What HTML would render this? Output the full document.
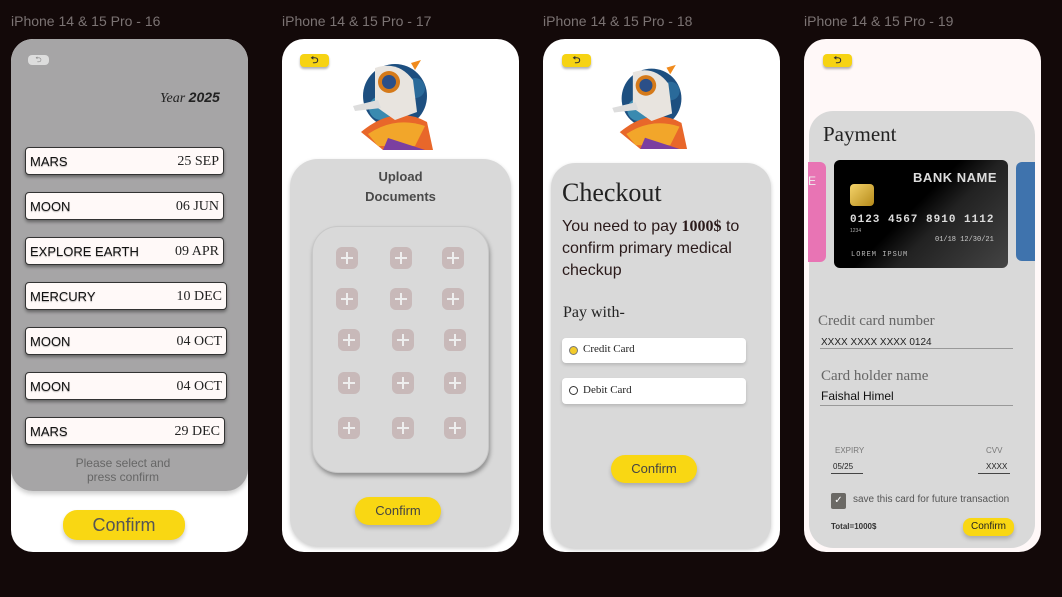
<!DOCTYPE html>
<html><head><meta charset="utf-8"><style>
*{margin:0;padding:0;box-sizing:border-box}
body{width:1062px;height:597px;background:#130909;position:relative;overflow:hidden;font-family:"Liberation Sans",sans-serif}
.a{position:absolute}
.lbl{position:absolute;top:13px;color:#7b7373;font-size:14px}
.frame{position:absolute;top:39px;width:237px;height:513px;border-radius:22px;background:#fff;overflow:hidden}
.row{position:absolute;left:25px;width:199px;height:28px;background:#fff9f8;border:1px solid #333;border-radius:4px;box-shadow:0 2px 3px rgba(0,0,0,.4)}
.row .l{position:absolute;left:4px;top:6px;font-size:13px;color:#111;text-shadow:0 1px 1px rgba(0,0,0,.3)}
.row .r{position:absolute;right:4px;top:6px;font-size:14px;font-family:"Liberation Serif",serif;color:#222}
.back{position:absolute;width:29px;height:13px;border-radius:4px;background:#f6d313;box-shadow:0 2px 2px rgba(0,0,0,.3);font-size:10px;line-height:13px;text-align:center;color:#333;font-weight:bold}
.plus{position:absolute;width:22px;height:22px;border-radius:6px;background:#c8b9b9}
.plus:before{content:"";position:absolute;left:5px;top:10px;width:12px;height:2px;background:#eee}
.plus:after{content:"";position:absolute;left:10px;top:5px;width:2px;height:12px;background:#eee}
.btn{position:absolute;background:#f9d713;border-radius:14px;text-align:center;color:#444;box-shadow:0 3px 4px rgba(0,0,0,.2)}
.ser{font-family:"Liberation Serif",serif}
</style></head><body>
<div class="lbl" style="left:11px">iPhone 14 &amp; 15 Pro - 16</div>
<div class="lbl" style="left:282px">iPhone 14 &amp; 15 Pro - 17</div>
<div class="lbl" style="left:543px">iPhone 14 &amp; 15 Pro - 18</div>
<div class="lbl" style="left:804px">iPhone 14 &amp; 15 Pro - 19</div>

<!-- Frame 1 -->
<div class="frame" style="left:11px">
 <div class="a" style="left:0;top:0;width:237px;height:452px;background:#a6a5a6;border-radius:22px;box-shadow:0 3px 5px rgba(0,0,0,.2)"></div>
</div>
<div class="a" style="left:28px;top:55px;width:21px;height:10px;border-radius:4px;background:#ddd;font-size:8px;line-height:10px;text-align:center;color:#888">⮌</div>
<div class="a ser" style="left:160px;top:89px;font-size:14px;color:#222"><i>Year</i> <b style="font-family:'Liberation Sans';font-style:italic">2025</b></div>
<div class="row" style="top:147px"><span class="l">MARS</span><span class="r">25 SEP</span></div>
<div class="row" style="top:192px"><span class="l">MOON</span><span class="r">06 JUN</span></div>
<div class="row" style="top:237px"><span class="l">EXPLORE EARTH</span><span class="r">09 APR</span></div>
<div class="row" style="top:282px;width:202px"><span class="l">MERCURY</span><span class="r">10 DEC</span></div>
<div class="row" style="top:327px;width:202px"><span class="l">MOON</span><span class="r">04 OCT</span></div>
<div class="row" style="top:372px;width:202px"><span class="l">MOON</span><span class="r">04 OCT</span></div>
<div class="row" style="top:417px;width:200px"><span class="l">MARS</span><span class="r">29 DEC</span></div>
<div class="a" style="left:60px;top:456px;width:126px;text-align:center;font-size:12px;line-height:14px;color:#666">Please select and press confirm</div>
<div class="btn" style="left:63px;top:510px;width:122px;height:30px;font-size:18px;line-height:30px;color:#555">Confirm</div>

<!-- astronaut svg template -->
<svg width="0" height="0" style="position:absolute"><defs>
<g id="astro">
 <circle cx="42" cy="38" r="32" fill="#1d4f80"/>
 <circle cx="28" cy="50" r="12" fill="#3a8ab0"/>
 <circle cx="62" cy="30" r="10" fill="#2a6a9a"/>
 <path d="M8 74 Q42 46 74 64 L80 92 L30 92 Z" fill="#e8672a"/>
 <path d="M15 76 Q42 58 72 68 L62 88 L25 88Z" fill="#f2a62a"/>
 <path d="M35 80 L72 92 L30 92Z" fill="#7b3fa0"/>
 <path d="M22 10 Q45 2 60 22 L64 54 L42 62 L22 48 Z" fill="#e8e4df"/>
 <circle cx="36" cy="24" r="11" fill="#d57a1a"/>
 <circle cx="36" cy="24" r="7" fill="#2b4f88"/>
 <path d="M0 48 L25 42 L28 50 L2 53Z" fill="#ddd"/>
 <path d="M58 5 L68 2 L62 12Z" fill="#f08a1c"/>
</g></defs></svg>

<!-- Frame 2 -->
<div class="frame" style="left:282px"></div>
<div class="back" style="left:300px;top:54px">⮌</div>
<svg class="a" style="left:353px;top:58px" width="85" height="92" viewBox="0 0 85 92"><use href="#astro"/></svg>
<div class="a" style="left:290px;top:159px;width:221px;height:387px;background:#d9d9d9;border-radius:28px;box-shadow:0 2px 4px rgba(0,0,0,.2)"></div>
<div class="a" style="left:290px;top:167px;width:221px;text-align:center;font-size:13px;line-height:20px;font-weight:bold;color:#4a4a4a">Upload<br>Documents</div>
<div class="a" style="left:312px;top:226px;width:177px;height:247px;border-radius:26px;background:#d9d9d9;border:1px solid #c8c8c8;box-shadow:1px 3px 4px rgba(0,0,0,.35)"></div>
<div class="plus" style="left:336px;top:247px"></div><div class="plus" style="left:390px;top:247px"></div><div class="plus" style="left:442px;top:247px"></div>
<div class="plus" style="left:336px;top:288px"></div><div class="plus" style="left:390px;top:288px"></div><div class="plus" style="left:442px;top:288px"></div>
<div class="plus" style="left:338px;top:329px"></div><div class="plus" style="left:392px;top:329px"></div><div class="plus" style="left:444px;top:329px"></div>
<div class="plus" style="left:338px;top:372px"></div><div class="plus" style="left:392px;top:372px"></div><div class="plus" style="left:444px;top:372px"></div>
<div class="plus" style="left:338px;top:417px"></div><div class="plus" style="left:392px;top:417px"></div><div class="plus" style="left:444px;top:417px"></div>
<div class="btn" style="left:355px;top:497px;width:86px;height:28px;font-size:13px;line-height:28px">Confirm</div>

<!-- Frame 3 -->
<div class="frame" style="left:543px"></div>
<div class="back" style="left:562px;top:54px">⮌</div>
<svg class="a" style="left:612px;top:63px" width="80" height="86" viewBox="0 0 85 92"><use href="#astro"/></svg>
<div class="a" style="left:551px;top:163px;width:220px;height:385px;background:#d9d9d9;border-radius:24px;box-shadow:0 2px 4px rgba(0,0,0,.2)"></div>
<div class="a ser" style="left:562px;top:178px;font-size:26px;color:#222">Checkout</div>
<div class="a" style="left:562px;top:216px;width:200px;font-size:16px;line-height:22px;color:#2a1a1a">You need to pay <b class="ser">1000$</b> to confirm primary medical checkup</div>
<div class="a ser" style="left:563px;top:304px;font-size:16px;color:#222">Pay with-</div>
<div class="a" style="left:562px;top:338px;width:184px;height:25px;background:#fff;border-radius:4px;box-shadow:0 2px 3px rgba(0,0,0,.15)"><span class="a" style="left:7px;top:8px;width:9px;height:9px;border-radius:50%;background:#f3cb2a;border:1px solid #777"></span><span class="a ser" style="left:21px;top:5px;font-size:11px;color:#222">Credit Card</span></div>
<div class="a" style="left:562px;top:378px;width:184px;height:26px;background:#fff;border-radius:4px;box-shadow:0 2px 3px rgba(0,0,0,.15)"><span class="a" style="left:7px;top:8px;width:9px;height:9px;border-radius:50%;background:#fff;border:1px solid #333"></span><span class="a ser" style="left:21px;top:6px;font-size:11px;color:#222">Debit Card</span></div>
<div class="btn" style="left:611px;top:455px;width:86px;height:28px;font-size:13px;line-height:28px">Confirm</div>

<!-- Frame 4 -->
<div class="frame" style="left:804px;background:#fff8f8"></div>
<div class="back" style="left:823px;top:54px">⮌</div>
<div class="a" style="left:809px;top:111px;width:226px;height:437px;background:#d9d9d9;border-radius:24px"></div>
<div class="a ser" style="left:823px;top:122px;font-size:21px;color:#222">Payment</div>
<div class="a" style="left:808px;top:162px;width:18px;height:100px;background:#e874b4;border-radius:0 6px 6px 0;color:#eee;font-size:12px;padding:12px 0 0 0">E</div>
<div class="a" style="left:1016px;top:162px;width:19px;height:99px;background:#3f73ad;border-radius:6px 0 0 6px"></div>
<div class="a" style="left:834px;top:160px;width:174px;height:108px;border-radius:6px;background:linear-gradient(135deg,#000 45%,#222 60%,#444 100%)">
 <div class="a" style="right:11px;top:10px;color:#ddd;font-size:13px;font-weight:bold;letter-spacing:.5px">BANK NAME</div>
 <div class="a" style="left:16px;top:24px;width:24px;height:22px;border-radius:4px;background:linear-gradient(135deg,#f4d36a,#b58a1a)"></div>
 <div class="a" style="left:16px;top:54px;color:#ddd;font-size:11px;font-family:'Liberation Mono',monospace;letter-spacing:1px;font-weight:bold">0123 4567 8910 1112</div>
 <div class="a" style="left:16px;top:68px;color:#aaa;font-size:5px">1234</div>
 <div class="a" style="left:101px;top:76px;color:#ccc;font-size:7px;font-family:'Liberation Mono',monospace">01/18 12/30/21</div>
 <div class="a" style="left:17px;top:91px;color:#bbb;font-size:7px;font-family:'Liberation Mono',monospace;letter-spacing:1px">LOREM IPSUM</div>
</div>
<div class="a ser" style="left:818px;top:313px;font-size:15px;color:#666">Credit card number</div>
<div class="a" style="left:821px;top:337px;font-size:10px;color:#222">XXXX XXXX XXXX 0124</div>
<div class="a" style="left:820px;top:348px;width:193px;height:1px;background:#999"></div>
<div class="a ser" style="left:821px;top:368px;font-size:15px;color:#666">Card holder name</div>
<div class="a" style="left:821px;top:389px;font-size:12px;color:#111">Faishal Himel</div>
<div class="a" style="left:820px;top:405px;width:193px;height:1px;background:#999"></div>
<div class="a" style="left:835px;top:446px;font-size:8px;color:#777">EXPIRY</div>
<div class="a" style="left:833px;top:462px;font-size:8px;color:#222">05/25</div>
<div class="a" style="left:831px;top:473px;width:32px;height:1px;background:#444"></div>
<div class="a" style="left:986px;top:446px;font-size:8px;color:#777">CVV</div>
<div class="a" style="left:986px;top:462px;font-size:8px;color:#222">XXXX</div>
<div class="a" style="left:978px;top:473px;width:32px;height:1px;background:#444"></div>
<div class="a" style="left:831px;top:493px;width:15px;height:16px;border-radius:2px;background:#6b6965;color:#fff;font-size:10px;text-align:center;line-height:16px">✓</div>
<div class="a" style="left:853px;top:494px;font-size:10px;color:#555">save this card for future transaction</div>
<div class="a" style="left:831px;top:522px;font-size:8px;color:#333;font-weight:bold">Total=1000$</div>
<div class="btn" style="left:963px;top:518px;width:51px;height:18px;border-radius:8px;font-size:10px;line-height:18px;color:#222">Confirm</div>
</body></html>
